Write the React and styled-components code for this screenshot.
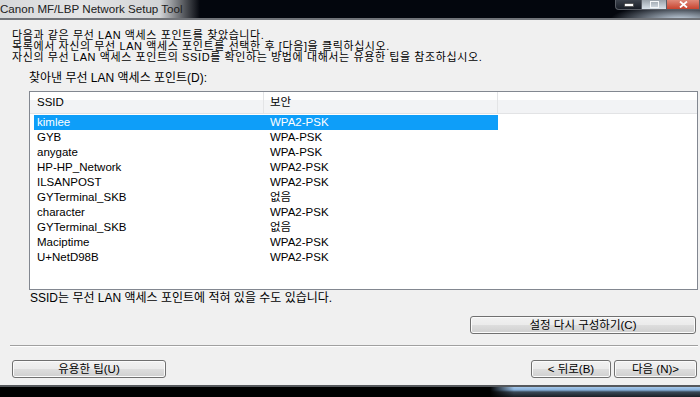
import React from 'react';
import styled, { createGlobalStyle } from 'styled-components';

const GlobalStyle = createGlobalStyle`
  html, body {
    margin: 0;
    padding: 0;
  }
  body {
    width: 700px;
    height: 397px;
    overflow: hidden;
    background: #f0f0f0;
    font-family: "Liberation Sans", "Noto Sans CJK KR", sans-serif;
  }
`;

const Window = styled.div`
  width: 700px;
  height: 397px;
  display: flex;
  flex-direction: column;
  overflow: hidden;
`;

const TitleBar = styled.div`
  height: 18px;
  flex-shrink: 0;
  display: flex;
  justify-content: space-between;
  align-items: flex-start;
  border-bottom: 2px solid #707378;
  background:
    radial-gradient(ellipse 70px 16px at 680px 20px, rgba(215, 230, 245, 0.95), rgba(215, 230, 245, 0) 100%),
    #03060d;
`;

const Title = styled.div`
  height: 18px;
  width: 200px;
  font-family: "Liberation Sans", sans-serif;
  font-size: 11.6px;
  line-height: 17px;
  color: #202020;
  white-space: nowrap;
  background: linear-gradient(to right, #d6d8da 0%, #e4e5e6 40%, #d2d4d6 80%, rgba(3, 6, 13, 0) 100%);
`;

const Controls = styled.div`
  display: flex;
  height: 10px;
`;

const CtrlButton = styled.div`
  width: ${p => p.$w}px;
  height: 10px;
  box-sizing: border-box;
  border: 1px solid #5a5e66;
  border-top: none;
  border-left-width: ${p => (p.$first ? 1 : 0)}px;
  border-bottom-left-radius: ${p => (p.$first ? 4 : 0)}px;
  display: flex;
  align-items: center;
  justify-content: center;
  background: ${p =>
    p.$close
      ? 'linear-gradient(#e08a7a, #c8432f)'
      : p.$light
      ? 'linear-gradient(#9aa2aa, #d9e2ea)'
      : 'linear-gradient(#3c424c, #1a1f28)'};
`;

const Body = styled.div`
  flex: 1;
  display: flex;
  flex-direction: column;
  padding-top: 10px;
  color: #000;
  font-size: 12px;
`;

const Intro = styled.div`
  padding-left: 12px;
  font-size: 11px;
  line-height: 11px;
  letter-spacing: 0.6px;
  white-space: nowrap;
`;

const Label = styled.div`
  margin: 9px 0 0 29px;
  line-height: 12px;
`;

const ListBox = styled.div`
  margin: 7px 2px 0 29px;
  height: 199px;
  box-sizing: border-box;
  border: 1px solid #828790;
  background: #fff;
  display: flex;
  flex-direction: column;
`;

const Header = styled.div`
  display: grid;
  grid-template-columns: 234px 234px 1fr;
  height: 22px;
  box-sizing: border-box;
  border-bottom: 1px solid #e2e3e5;
  background: linear-gradient(#ffffff 0%, #ffffff 38%, #f2f3f5 40%, #f2f3f5 100%);
`;

const HeaderCell = styled.div`
  padding-left: ${p => p.$pad}px;
  border-right: 1px solid #e3e4e6;
  line-height: 21px;
  font-size: 11.5px;
`;

const Rows = styled.div`
  padding: 1px 0 0 4px;
  display: flex;
  flex-direction: column;
`;

const Row = styled.div`
  display: grid;
  grid-template-columns: 230px 234px;
  width: 464px;
  height: 15px;
  line-height: 15px;
  font-size: 11.5px;
  background: ${p => (p.$selected ? '#0e9ef9' : 'transparent')};
  color: ${p => (p.$selected ? '#fff' : '#000')};
`;

const Cell = styled.div`
  padding-left: ${p => p.$pad}px;
  white-space: nowrap;
`;

const Note = styled.div`
  margin: 2px 0 0 30px;
  line-height: 12px;
`;

const ButtonRow = styled.div`
  display: flex;
  justify-content: ${p => p.$justify || 'flex-end'};
  margin-top: ${p => p.$top}px;
  padding: ${p => p.$pad};
`;

const ButtonGroup = styled.div`
  display: flex;
  gap: 3px;
`;

const WinButton = styled.button`
  width: ${p => p.$w}px;
  height: 18px;
  box-sizing: border-box;
  padding: 0;
  border: 1px solid #707070;
  border-radius: 3px;
  box-shadow: inset 0 0 0 1px #fbfbfb;
  background: linear-gradient(#f2f2f2 0%, #ebebeb 48%, #dddddd 52%, #cfcfcf 100%);
  font-family: "Liberation Sans", "Noto Sans CJK KR", sans-serif;
  font-size: 11.5px;
  line-height: 15px;
  color: #000;
`;

const Separator = styled.div`
  margin: 11px 2px 0 10px;
  border-top: 1px solid #a0a0a0;
  border-bottom: 1px solid #ffffff;
`;

const Taskbar = styled.div`
  height: 12px;
  flex-shrink: 0;
  box-sizing: border-box;
  border-top: 2px solid #55585c;
  background:
    linear-gradient(to right, #000 0px, rgba(0, 0, 0, 0) 24px) 490px 0 / 210px 100% no-repeat,
    linear-gradient(#a6c8ea 0px, #87b0da 3px, #3a4856 5px, #1a1f25 10px) 490px 0 / 210px 100% no-repeat,
    #000;
`;

const networks = [
  ['kimlee', 'WPA2-PSK'],
  ['GYB', 'WPA-PSK'],
  ['anygate', 'WPA-PSK'],
  ['HP-HP_Network', 'WPA2-PSK'],
  ['ILSANPOST', 'WPA2-PSK'],
  ['GYTerminal_SKB', '없음'],
  ['character', 'WPA2-PSK'],
  ['GYTerminal_SKB', '없음'],
  ['Maciptime', 'WPA2-PSK'],
  ['U+NetD98B', 'WPA2-PSK'],
];

export default function App() {
  return (
    <>
      <GlobalStyle />
      <Window>
        <TitleBar>
          <Title>Canon MF/LBP Network Setup Tool</Title>
          <Controls>
            <CtrlButton $w={27} $first>
              <svg width="10" height="4" viewBox="0 0 10 4">
                <rect x="0.5" y="0.5" width="9" height="3" fill="#fff" stroke="#333" strokeWidth="0.6" />
              </svg>
            </CtrlButton>
            <CtrlButton $w={25} $light>
              <svg width="9" height="7" viewBox="0 0 9 7">
                <rect x="0.5" y="0.5" width="8" height="6" fill="none" stroke="#f4f6f8" strokeWidth="1" />
              </svg>
            </CtrlButton>
            <CtrlButton $w={33} $close>
              <svg width="9" height="7" viewBox="0 0 9 7">
                <path d="M1 0.5 L8 6.5 M8 0.5 L1 6.5" stroke="#fff" strokeWidth="1.8" />
              </svg>
            </CtrlButton>
          </Controls>
        </TitleBar>

        <Body>
          <Intro>
            다음과 같은 무선 LAN 액세스 포인트를 찾았습니다.
            <br />
            목록에서 자신의 무선 LAN 액세스 포인트를 선택한 후 [다음]을 클릭하십시오.
            <br />
            자신의 무선 LAN 액세스 포인트의 SSID를 확인하는 방법에 대해서는 유용한 팁을 참조하십시오.
          </Intro>

          <Label>찾아낸 무선 LAN 액세스 포인트(D):</Label>

          <ListBox>
            <Header>
              <HeaderCell $pad={7}>SSID</HeaderCell>
              <HeaderCell $pad={6}>보안</HeaderCell>
              <div />
            </Header>
            <Rows>
              {networks.map(([ssid, sec], i) => (
                <Row key={i} $selected={i === 0}>
                  <Cell $pad={3}>{ssid}</Cell>
                  <Cell $pad={6}>{sec}</Cell>
                </Row>
              ))}
            </Rows>
          </ListBox>

          <Note>SSID는 무선 LAN 액세스 포인트에 적혀 있을 수도 있습니다.</Note>

          <ButtonRow $top={12} $pad="0 4px 0 0">
            <WinButton $w={226}>설정 다시 구성하기(C)</WinButton>
          </ButtonRow>

          <Separator />

          <ButtonRow $top={13} $pad="0 3px 0 12px" $justify="space-between">
            <WinButton $w={154}>유용한 팁(U)</WinButton>
            <ButtonGroup>
              <WinButton $w={80}>&lt; 뒤로(B)</WinButton>
              <WinButton $w={83}>다음 (N)&gt;</WinButton>
            </ButtonGroup>
          </ButtonRow>
        </Body>

        <Taskbar />
      </Window>
    </>
  );
}
